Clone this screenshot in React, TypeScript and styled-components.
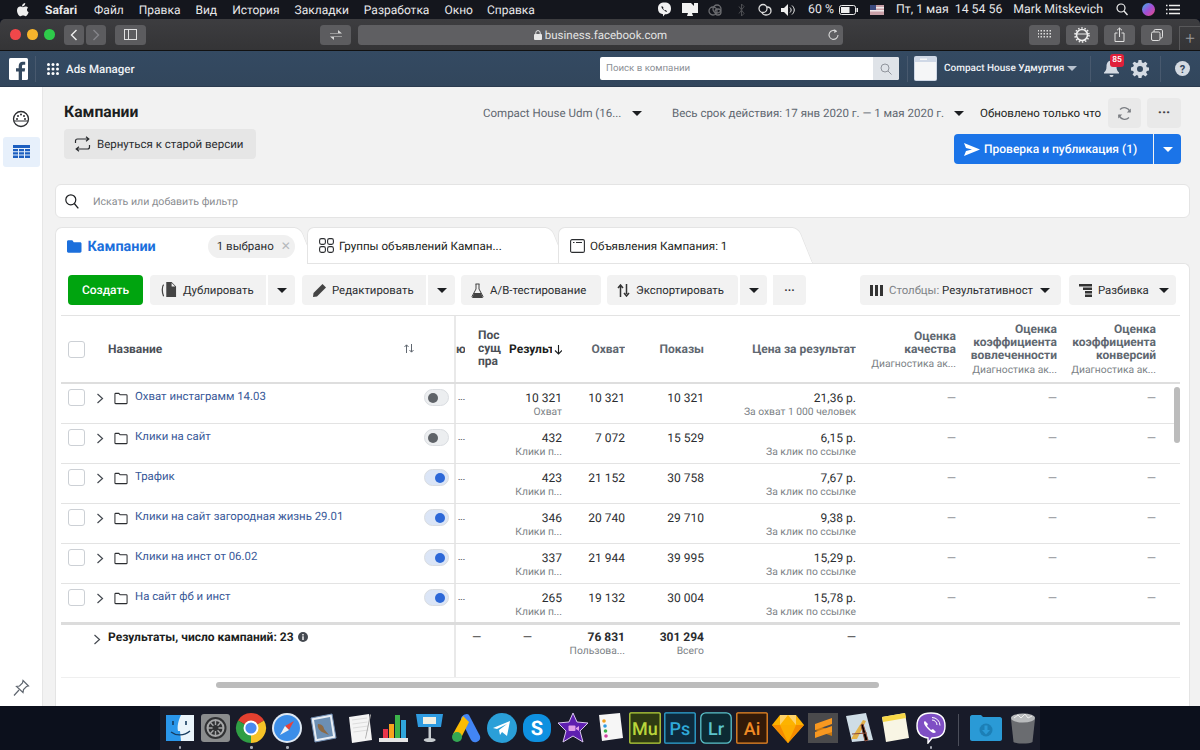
import React from 'react';
import styled, { createGlobalStyle } from 'styled-components';

const Global = createGlobalStyle`
  html, body { margin: 0; padding: 0; background: #0b0f1a; }
  * { box-sizing: border-box; }
  body { font-family: Roboto, "Liberation Sans", sans-serif; text-rendering: geometricPrecision; }
`;

const Page = styled.div`
  width: 1200px; height: 750px; overflow: hidden; display: flex; flex-direction: column; background: #0c101c; position: relative;
`;

/* ---------- macOS menu bar ---------- */
const MenuBar = styled.div`
  height: 19px; flex: none; background: #14161d; color: #e8e8ea; display: flex; align-items: center;
  padding: 0 20px 0 17px; font-size: 12px;
`;
const MenuItem = styled.span<{ $bold?: boolean; $ml?: number }>`
  font-weight: ${p => (p.$bold ? 700 : 400)}; margin-left: ${p => p.$ml ?? 0}px; white-space: nowrap;
`;
const MenuRight = styled.div`
  margin-left: auto; display: flex; align-items: center; font-size: 12.3px;
`;
const Glyph = styled.svg<{ $ml?: number }>`
  display: block; flex: none; margin-left: ${p => p.$ml ?? 0}px;
`;

/* ---------- Safari toolbar ---------- */
const SafariBar = styled.div`
  height: 32px; flex: none; background: linear-gradient(#3d3d40, #343436); border-bottom: 1px solid #111;
  border-radius: 5px 5px 0 0; display: flex; align-items: center; padding-left: 10px; position: relative;
`;
const Light = styled.span<{ $c: string }>`
  width: 10.5px; height: 10.5px; border-radius: 50%; background: ${p => p.$c}; margin-right: 6.5px; flex: none;
`;
const SafariBtn = styled.div<{ $w: number; $ml?: number }>`
  width: ${p => p.$w}px; height: 20px; border-radius: 3.5px; background: #5c5c5f; margin-left: ${p => p.$ml ?? 0}px;
  display: flex; align-items: center; justify-content: center; flex: none; color: #dcdcdc;
`;
const UrlBar = styled.div`
  width: 485px; height: 20px; margin-left: 7px; border-radius: 3.5px; background: #5f5f62; color: #e4e4e4; font-size: 11.5px;
  display: flex; align-items: center; justify-content: center; gap: 3px; position: relative; flex: none;
`;
const UrlReload = styled.span`
  position: absolute; right: 3px; top: 3px; display: flex;
`;
const NewTab = styled.div`
  margin-left: 7px; width: 21px; height: 24px; align-self: flex-end; border-left: 1px solid #58585a; border-top: 1px solid #58585a;
  color: #9b9b9d; font-size: 17px; font-weight: 300; display: flex; align-items: center; justify-content: center;
`;

/* ---------- Facebook top bar ---------- */
const FbBar = styled.div`
  height: 36px; flex: none; background: linear-gradient(#344a62, #32465c); display: flex; align-items: center; color: #eef1f5;
  border-bottom: 1px solid #2b3b4f; padding-left: 9px;
`;
const VDivider = styled.span<{ $ml: number }>`
  width: 1px; height: 26px; background: #48596e; margin-left: ${p => p.$ml}px; flex: none;
`;
const AdsTitle = styled.span`
  margin-left: 7px; width: 70px; flex: none; font-size: 11.5px; font-weight: 500; white-space: nowrap;
`;
const CompanySearch = styled.div`
  margin-left: 464px; width: 299px; height: 23px; background: #fff; border-radius: 2px; display: flex; align-items: center;
  font-size: 9.7px; color: #8c9096; padding-left: 6px; flex: none; overflow: hidden;
`;
const CompanySearchBtn = styled.span`
  margin-left: auto; width: 26px; height: 100%; background: #dfe3e8; display: flex; align-items: center; justify-content: center;
`;
const AccountName = styled.span`
  margin-left: 7px; font-size: 10px; font-weight: 500; white-space: nowrap; width: 118px; flex: none;
`;
const Caret = styled.span<{ $c?: string; $ml?: number; $s?: number }>`
  width: 0; height: 0; flex: none; margin-left: ${p => p.$ml ?? 0}px;
  border-left: ${p => p.$s ?? 5}px solid transparent; border-right: ${p => p.$s ?? 5}px solid transparent;
  border-top: ${p => (p.$s ?? 5) + 0.5}px solid ${p => p.$c ?? '#1c1e21'};
`;
const BellWrap = styled.div`
  position: relative; margin-left: 12px; width: 17px; height: 20px; flex: none;
`;
const Badge = styled.span`
  position: absolute; left: 7px; top: -5px; width: 14px; height: 13px; background: #e0203a; border-radius: 3px; color: #fff;
  font-size: 8.5px; font-weight: 500; display: flex; align-items: center; justify-content: center;
`;

/* ---------- Body ---------- */
const Body = styled.div`
  flex: 1; display: flex; min-height: 0; background: #f2f2f2;
`;
const SideNav = styled.div`
  width: 43px; flex: none; background: #fff; border-right: 1px solid #e6e6e6; display: flex; flex-direction: column; align-items: center;
  padding-top: 23px;
`;
const NavTile = styled.div`
  margin-top: 9px; width: 37px; height: 30px; background: #e7f0fb; border-radius: 3px; display: flex; align-items: center; justify-content: center;
`;
const PinWrap = styled.div`
  margin-top: auto; margin-bottom: 9px; display: flex;
`;
const Content = styled.div`
  flex: 1; min-width: 0; padding: 0 10px 0 12px; display: flex; flex-direction: column;
`;
const Header = styled.div`
  height: 97px; flex: none; display: flex; justify-content: space-between; padding: 11px 9px 0 9px;
`;
const HeaderLeft = styled.div`
  display: flex; flex-direction: column; align-items: flex-start;
`;
const Title = styled.div`
  font-size: 15.7px; font-weight: 700; color: #1c1e21; line-height: 28px; height: 31px;
`;
const OldVersionBtn = styled.div`
  width: 192px; height: 30px; background: #e6e6e6; border-radius: 4px; display: flex; align-items: center; padding-left: 10px; gap: 6px;
  font-size: 11.5px; color: #2b2d30; white-space: nowrap;
`;
const HeaderRight = styled.div`
  display: flex; flex-direction: column; align-items: flex-end; gap: 6px;
`;
const HeaderTop = styled.div`
  display: flex; align-items: center; height: 30px;
`;
const Muted = styled.span<{ $w: number; $ml?: number }>`
  font-size: 11.5px; color: #606770; width: ${p => p.$w}px; margin-left: ${p => p.$ml ?? 0}px; white-space: nowrap; flex: none;
`;
const Strong = styled.span`
  font-size: 11.5px; color: #1c1e21; white-space: nowrap; margin-left: 16px; width: 124px; flex: none;
`;
const SquareBtn = styled.div<{ $ml: number; $w?: number }>`
  width: ${p => p.$w ?? 33}px; height: 30px; background: #e9e9e9; border-radius: 4px; margin-left: ${p => p.$ml}px; display: flex; align-items: center; justify-content: center;
  color: #444; font-size: 14px; font-weight: 700; flex: none;
`;
const PublishRow = styled.div`
  display: flex; gap: 1px; height: 30px;
`;
const PublishBtn = styled.div`
  width: 199px; background: #1b74e8; color: #fff; border-radius: 4px 0 0 4px; display: flex; align-items: center; padding-left: 10px; gap: 4px;
  font-size: 12px; font-weight: 500; white-space: nowrap;
`;
const PublishCaret = styled.div`
  width: 27px; background: #1b74e8; border-radius: 0 4px 4px 0; display: flex; align-items: center; justify-content: center;
`;
const FilterBar = styled.div`
  height: 34px; flex: none; background: #fff; border: 1px solid #e4e4e4; border-radius: 6px; display: flex; align-items: center; padding-left: 9px; gap: 14px;
  font-size: 10.6px; color: #8a8d91;
`;
const Tabs = styled.div`
  margin-top: 9px; height: 37px; flex: none; display: flex; align-items: stretch; position: relative; z-index: 1;
`;
const Tab = styled.div<{ $w: number; $active?: boolean; $ml?: number }>`
  position: relative; width: ${p => p.$w}px; margin-left: ${p => p.$ml ?? 0}px; flex: none; background: #fff;
  border: 1px solid #e4e4e4; border-right: none; border-bottom: ${p => (p.$active ? 'none' : '1px solid #e4e4e4')};
  border-radius: 7px 0 0 0; display: flex; align-items: center; padding-left: 11px; font-size: 11.6px; color: #1c1e21; gap: 5px; white-space: nowrap;
  &::after {
    content: ''; position: absolute; top: -1px; right: -13px; bottom: ${p => (p.$active ? '0' : '-1px')}; width: 26px; background: #fff; z-index: -1;
    border: 1px solid #e4e4e4; border-left: none; border-bottom: ${p => (p.$active ? 'none' : '1px solid #e4e4e4')}; border-radius: 0 7px 0 0; transform: skewX(22deg);
  }
`;
const TabTitle = styled.span`
  color: #1b6fdc; font-size: 14.4px; font-weight: 700; padding-top: 1px; margin-left: 1px;
`;
const Pill = styled.span`
  margin-left: 47px; height: 23px; width: 90px; border-radius: 12px; background: #f0f0f0; font-size: 11.5px; display: flex; align-items: center; padding-left: 9px; gap: 7px; color: #2b2d30;
`;
const PillX = styled.span`
  color: #b5b8bc; font-size: 12px;
`;
const Panel = styled.div`
  flex: 1; min-height: 0; background: #fff; border: 1px solid #e4e4e4; border-bottom: none; border-radius: 0 6px 0 0; margin-top: -1px; padding: 11px 5px 0 5px; position: relative;
`;
const ActionBar = styled.div`
  display: flex; align-items: stretch; height: 30px; padding-left: 7px; padding-right: 8px;
`;
const Create = styled.div`
  width: 75px; background: #00a40f; color: #fff; border-radius: 4px; font-size: 12px; font-weight: 500; display: flex; align-items: center; justify-content: center; flex: none;
`;
const Action = styled.div<{ $w: number; $ml?: number; $split?: 'l' | 'r'; $push?: boolean }>`
  width: ${p => p.$w}px; margin-left: ${p => (p.$push ? 'auto' : `${p.$ml ?? 7}px`)}; flex: none; background: #f2f2f2;
  border-radius: ${p => (p.$split === 'l' ? '4px 0 0 4px' : p.$split === 'r' ? '0 4px 4px 0' : '4px')};
  display: flex; align-items: center; justify-content: ${p => (p.$split === 'r' ? 'center' : 'flex-start')}; gap: 6px; padding-left: ${p => (p.$split === 'r' ? 0 : 10)}px;
  font-size: 11.4px; color: #2b2d30; white-space: nowrap;
  svg { flex: none; }
`;
const ActionMuted = styled.span`
  color: #808488;
`;
const TableWrap = styled.div`
  margin-top: 10px; border-top: 1px solid #e3e3e3; margin-right: 4px; position: relative;
`;
const Row = styled.div<{ $h: number; $b?: number; $c?: string }>`
  display: grid; grid-template-columns: 395px 14px 35px 57px 63px 79px 152px 100px 101px 99px 1fr; height: ${p => p.$h}px;
  border-bottom: ${p => p.$b ?? 1}px solid ${p => p.$c ?? '#e3e3e3'};
`;
const NameCell = styled.div`
  border-right: 2px solid #e9e9e9; display: flex; align-items: flex-start; position: relative; min-width: 0;
`;
const CheckBox = styled.span<{ $top?: number }>`
  width: 17px; height: 17px; margin: ${p => p.$top ?? 5}px 0 0 7px; border: 1px solid #ccd0d5; border-radius: 3px; background: #fff; flex: none;
`;
const HeaderName = styled.span`
  margin-left: 23px; margin-top: 26px; font-size: 12px; font-weight: 700; color: #4b4f56;
`;
const SortIcon = styled.span`
  position: absolute; right: 40px; top: 28px; display: flex;
`;
const Chevron = styled.svg`
  display: block; margin: 9px 0 0 11px; flex: none;
`;
const FolderIcon = styled.svg`
  display: block; margin: 8px 0 0 10px; flex: none;
`;
const CampName = styled.span`
  margin: 5px 0 0 7px; font-size: 11.4px; color: #385898; white-space: nowrap;
`;
const Toggle = styled.span<{ $on?: boolean }>`
  margin: 5px 5px 0 auto; width: 25px; height: 17px; border-radius: 9px; border: 1px solid #dadde1; padding: 2px 3px;
  background: ${p => (p.$on ? '#dbe5f6' : '#eceef0')}; display: flex; justify-content: ${p => (p.$on ? 'flex-end' : 'flex-start')}; align-items: center; flex: none;
  &::before { content: ''; width: 10px; height: 10px; border-radius: 50%; background: ${p => (p.$on ? '#2d68d8' : '#5f6368')}; }
`;
const Dots = styled.span`
  font-size: 8px; font-weight: 700; color: #606770; padding: 9px 0 0 2px; white-space: nowrap; overflow: hidden;
`;
const Clip = styled.div<{ $w?: number; $pl?: number; $pt?: number }>`
  font-size: 12px; font-weight: 700; color: #4b4f56; overflow: hidden; white-space: nowrap; line-height: 13px;
  max-width: ${p => (p.$w ? `${p.$w}px` : 'none')}; padding-left: ${p => p.$pl ?? 0}px; padding-top: ${p => p.$pt ?? 13}px;
`;
const HeadCell = styled.div<{ $active?: boolean }>`
  display: flex; flex-direction: column; justify-content: center; align-items: flex-end; text-align: right; font-size: 12px; font-weight: 700; line-height: 13px;
  color: ${p => (p.$active ? '#1c1e21' : '#606770')}; white-space: nowrap; overflow: hidden; padding-top: 1px;
`;
const HeadRow = styled(HeadCell)`
  flex-direction: row; align-items: center; justify-content: flex-end;
`;
const HeadClip = styled.span`
  width: 43px; overflow: hidden;
`;
const HeadArrow = styled.svg`
  display: block; flex: none; margin: 0 -1px 0 2px;
`;
const HeadSub = styled.span`
  font-size: 10.3px; font-weight: 400; color: #7b7f85; margin-top: 1px; line-height: 13px;
`;
const Cell = styled.div<{ $bold?: boolean; $pt?: number; $pr?: number }>`
  text-align: right; padding-top: ${p => p.$pt ?? 7}px; padding-right: ${p => p.$pr ?? 0}px; font-size: 12px; line-height: 14px; color: #2b2d30; font-weight: ${p => (p.$bold ? 700 : 400)}; white-space: nowrap;
`;
const Sub = styled.div`
  font-size: 10.3px; line-height: 14px; color: #7b7f85; font-weight: 400;
`;
const Dash = styled.span<{ $dark?: boolean }>`
  color: ${p => (p.$dark ? '#333' : '#8a8d91')};
`;
const SumLabel = styled.span`
  margin: 5px 0 0 -1px; font-size: 12px; font-weight: 700; color: #1c1e21; white-space: nowrap; display: flex; align-items: center; gap: 4px;
`;
const SumChevron = styled.svg`
  display: block; margin: 9px 8px 0 32px; flex: none;
`;
const SumDash = styled.div`
  grid-column: 2 / 4; padding: 5px 0 0 16px; font-size: 12px; color: #333;
`;
const VScroll = styled.div`
  position: absolute; right: 0; top: 71px; width: 6px; height: 56px; border-radius: 3px; background: #bcbcbc;
`;
const HScroll = styled.div`
  position: absolute; left: 155px; top: 366px; width: 663px; height: 6px; border-radius: 3px; background: #bcbcbc;
`;

/* ---------- Dock ---------- */
const DockRow = styled.div`
  height: 44px; flex: none; display: flex; justify-content: center; background: #0c101c;
`;
const Dock = styled.div`
  width: 880px; height: 44px; background: #181b29; display: flex; align-items: flex-start; padding: 5px 0 0 2px; border-top: 1px solid #3a3d48; position: relative;
`;
const Slot = styled.div<{ $w?: number }>`
  width: ${p => p.$w ?? 35.75}px; flex: none; display: flex; flex-direction: column; align-items: center; position: relative;
`;
const RunDot = styled.span`
  position: absolute; left: 50%; margin-left: -1px; top: 34px; width: 2.5px; height: 2.5px; border-radius: 50%; background: #a9adb6;
`;
const DockSep = styled.span`
  width: 1px; height: 32px; background: #4b4e5a; margin: 2px 9px 0 9px; flex: none;
`;

const Ico = ({ children }: { children: React.ReactNode }) => (
  <Glyph width={32} height={32} viewBox="0 0 32 32">{children}</Glyph>
);
const Cc = ({ letters, fg, bg, r = 1 }: { letters: string; fg: string; bg: string; r?: number }) => (
  <Ico>
    <rect x="0.8" y="0.8" width="30.4" height="30.4" rx={r} fill={bg} stroke={fg} strokeWidth="1.3" />
    <text x="16" y="22.5" textAnchor="middle" fontFamily="Roboto, sans-serif" fontSize="18" fontWeight="500" fill={fg}>{letters}</text>
  </Ico>
);

const dockIcons: { el: React.ReactNode; dot?: boolean }[] = [
  { dot: true, el: <Ico><rect x="2" y="3" width="28" height="26" fill="#eaf4fb" /><path d="M2 3h15c-3 6-4 12-3 16h2l1 10H2z" fill="#2a96ea" /><path d="M9 9v4M22 9v4" stroke="#173c60" strokeWidth="1.6" /><path d="M7 20c5 4 13 4 19-1" stroke="#173c60" strokeWidth="1.3" fill="none" /></Ico> },
  { el: <Ico><rect x="1" y="2" width="29" height="28" rx="3" fill="#8a8c8d" /><circle cx="15.5" cy="16" r="11" fill="#303133" /><circle cx="15.5" cy="16" r="8" fill="none" stroke="#a5a6a7" strokeWidth="2" /><path d="M15.5 8v16M8 16h15M10 10l11 12M21 10L10 22" stroke="#a5a6a7" strokeWidth="1.4" /><circle cx="15.5" cy="16" r="3" fill="#303133" /></Ico> },
  { dot: true, el: <Ico><path d="M16 16L3 8.5A15 15 0 0 1 29 8.5z" fill="#e2402f" /><path d="M16 16L29 8.5A15 15 0 0 1 16 31z" fill="#f6c327" /><path d="M16 16L16 31A15 15 0 0 1 3 8.5z" fill="#2f9e44" /><circle cx="16" cy="16" r="7.5" fill="#fff" /><circle cx="16" cy="16" r="5.6" fill="#4a8af0" /></Ico> },
  { dot: true, el: <Ico><circle cx="16" cy="16" r="15" fill="#dfe9f3" /><circle cx="16" cy="16" r="13" fill="#3c8ee8" /><path d="M23 9l-9 5 4 4z" fill="#e8423a" /><path d="M9 23l5-9 4 4z" fill="#f2f2f2" /></Ico> },
  { el: <Ico><path d="M4 6L25 2l4 24-21 4z" fill="#e8eef5" stroke="#6f8cb0" /><path d="M7 8l16-3 3 19-16 3z" fill="#6c8fb3" /><path d="M11 12c4 0 6 3 6 5l5 6-7-3c-3-2-5-5-4-8z" fill="#8d6a44" /></Ico> },
  { el: <Ico><path d="M6 5l20-3 3 26-20 3z" fill="#f4f4f4" /><path d="M9 8l15-2M9.5 12l15-2M10 16l15-2M10.5 20l15-2" stroke="#ddd" /><path d="M27 2l1 1-5 23-1 1z" fill="#a8a8a8" /></Ico> },
  { el: <Ico><path d="M1 26h29v4H1z" fill="#e6e6e6" /><rect x="5" y="17" width="5" height="9" fill="#e8354a" /><rect x="11" y="12" width="5" height="14" fill="#f7a31c" /><rect x="17" y="3" width="5" height="23" fill="#3cb44a" /><rect x="23" y="8" width="5" height="18" fill="#2fa6dc" /></Ico> },
  { el: <Ico><path d="M2 2h27l-2 13H4z" fill="#2f9be0" /><rect x="9" y="5" width="13" height="7" fill="#f1efe2" /><rect x="14.5" y="15" width="2.5" height="12" fill="#c8ccd0" /><ellipse cx="15.7" cy="28" rx="6" ry="2" fill="#c8ccd0" /></Ico> },
  { el: <Ico><path d="M19 3l11 21a5 5 0 0 1-9 4L11 8c-1-4 6-8 8-5z" fill="#4285f4" /><path d="M13 4L3 22l8 4 8-16z" fill="#fbbc04" /><circle cx="7" cy="25" r="5" fill="#34a853" /></Ico> },
  { el: <Ico><circle cx="16" cy="16" r="15" fill="#2a9fd8" /><path d="M7 16L24 9l-3 15-5-4-2 3-1-5 8-6-10 5z" fill="#fff" /></Ico> },
  { el: <Ico><rect x="2" y="2" width="28" height="28" rx="12" fill="#0e90e0" /><text x="16" y="23" textAnchor="middle" fontFamily="Roboto, sans-serif" fontSize="20" fontWeight="700" fill="#fff">S</text></Ico> },
  { el: <Ico><path d="M16 1l4 9 11 1-8 8 3 11-10-6-10 6 3-11-8-8 11-1z" fill="#5e1fb0" stroke="#d9c8ee" /><rect x="11.5" y="13.5" width="7" height="5.5" rx="1" fill="#e0a0e8" /><path d="M19 16l3-2v5l-3-2z" fill="#e0a0e8" /></Ico> },
  { el: <Ico><path d="M6 3l21-2 3 25-21 3z" fill="#f6f6f6" /><circle cx="11" cy="9" r="1.8" fill="#f0a020" /><circle cx="12" cy="14" r="1.8" fill="#2f9be0" /><circle cx="12.5" cy="19" r="1.8" fill="#3cb44a" /><circle cx="13" cy="24" r="1.8" fill="#d040a0" /></Ico> },
  { el: <Cc letters="Mu" fg="#b9d63b" bg="#2e3a12" /> },
  { el: <Cc letters="Ps" fg="#2fa8d8" bg="#0d2a3d" /> },
  { el: <Cc letters="Lr" fg="#5bc4cc" bg="#0c2a33" r={5} /> },
  { el: <Cc letters="Ai" fg="#f08a24" bg="#331a08" /> },
  { el: <Ico><path d="M8 3h16l8 10-16 18L0 13z" fill="#fdb300" /><path d="M0 13h32L16 31z" fill="#f58b00" /><path d="M8 13h16l-8 18z" fill="#fdad00" /><path d="M8 3l8 0-8 10zM24 3h-8l8 10z" fill="#fed26a" /></Ico> },
  { el: <Ico><rect x="1" y="1" width="30" height="30" fill="#4a4a4c" /><path d="M8 13l17 5.500V24L8 18z" fill="#c9780f" /><path d="M8 12l17-6v6L8 18zM8 20l17-6v6L8 26z" fill="#f89820" /></Ico> },
  { el: <Ico><path d="M3 4l20-3 7 27-21 2z" fill="#cfdde6" /><path d="M8 27L20 8l3 1-9 18z" fill="#e3b24a" /><path d="M22 29L18 13l2-1 5 16zM9 22l15-1" stroke="#8a4a3a" strokeWidth="1" /></Ico> },
  { el: <Ico><path d="M3 5l23-4 4 25-23 4z" fill="#f8f5e4" /><path d="M3 5l23-4 1 5-23 4z" fill="#f8d848" /></Ico> },
  { dot: true, el: <Ico><path d="M16 1c9 0 14 4 14 13s-5 12-13 12l-4 5v-5C5 25 2 21 2 14 2 5 7 1 16 1z" fill="#7f4fc4" stroke="#fff" strokeWidth="1.4" /><path d="M10 9c-2 1-1 4 3 8s6 5 8 3l-3-3-2 1-4-4 1-2z" fill="#fff" /><path d="M17 8a5 5 0 0 1 5 5M17 5.5a8 8 0 0 1 8 8" stroke="#fff" fill="none" strokeWidth="1" /></Ico> },
];

const TinyChevron = ({ as: C }: { as: typeof Chevron }) => (
  <C width="8" height="11" viewBox="0 0 8 11"><path d="M1.5 1l5 4.5-5 4.5" fill="none" stroke="#444950" strokeWidth="1.2" /></C>
);

const Folder = () => (
  <FolderIcon width="14" height="13" viewBox="0 0 15 13"><path d="M1 11.2V1.8C1 1.2 1.3 1 1.8 1h3.4l1.3 1.6h6.7c.5 0 .8.3.8.8v7.8c0 .6-.4.8-.8.8H1.8c-.5 0-.8-.3-.8-.8z" fill="none" stroke="#2b2d30" strokeWidth="1.1" /></FolderIcon>
);

const rows = [
  { n: 'Охват инстаграмм 14.03', on: false, r: '10 321', rs: 'Охват', a: '10 321', s: '10 321', c: '21,36 р.', cs: 'За охват 1 000 человек' },
  { n: 'Клики на сайт', on: false, r: '432', rs: 'Клики п...', a: '7 072', s: '15 529', c: '6,15 р.', cs: 'За клик по ссылке' },
  { n: 'Трафик', on: true, r: '423', rs: 'Клики п...', a: '21 152', s: '30 758', c: '7,67 р.', cs: 'За клик по ссылке' },
  { n: 'Клики на сайт загородная жизнь 29.01', on: true, r: '346', rs: 'Клики п...', a: '20 740', s: '29 710', c: '9,38 р.', cs: 'За клик по ссылке' },
  { n: 'Клики на инст от 06.02', on: true, r: '337', rs: 'Клики п...', a: '21 944', s: '39 995', c: '15,29 р.', cs: 'За клик по ссылке' },
  { n: 'На сайт фб и инст', on: true, r: '265', rs: 'Клики п...', a: '19 132', s: '30 004', c: '15,78 р.', cs: 'За клик по ссылке' },
];

export default function App() {
  return (
    <Page>
      <Global />
      <MenuBar>
        <Glyph width="12" height="14" viewBox="0 0 12 14"><path fill="#eee" d="M8.2 0c.1 1-.3 1.9-.9 2.5-.6.7-1.4 1.1-2.2 1-.1-.9.3-1.8.9-2.4C6.6.5 7.5.1 8.2 0zM11 4.800c-1.600 1-1.400 3.500.6 4.400-.5 1.500-1.700 4-3 4-.9 0-1.300-.6-2.500-.6s-1.600.6-2.500.6C2 13.200 0 10 0 7.400 0 4.900 1.600 3.600 3.200 3.600c1 0 1.900.7 2.800.7.800 0 1.800-.7 3-.7.8 0 1.500.4 2 1.200z" /></Glyph>
        <MenuItem $bold $ml={16}>Safari</MenuItem>
        <MenuItem $ml={17}>Файл</MenuItem>
        <MenuItem $ml={15}>Правка</MenuItem>
        <MenuItem $ml={15}>Вид</MenuItem>
        <MenuItem $ml={15}>История</MenuItem>
        <MenuItem $ml={15}>Закладки</MenuItem>
        <MenuItem $ml={15}>Разработка</MenuItem>
        <MenuItem $ml={15}>Окно</MenuItem>
        <MenuItem $ml={14}>Справка</MenuItem>
        <MenuRight>
          <Glyph width="15" height="15" viewBox="0 0 15 15"><path fill="#f2f2f2" d="M7.500.5c4 0 6.500 1.800 6.500 6s-2.500 5.800-6 5.800l-2 2.200v-2.300C2.500 11.700 1 9.800 1 6.500 1 2.300 3.500.5 7.500.5z" /><path fill="#14161d" d="M5 4c-1 .6-.5 2 1.300 3.800S9.400 10 10.200 9.400L8.700 8l-1 .4-1.600-1.600.4-1z" /></Glyph>
          <Glyph $ml={10} width="16" height="15" viewBox="0 0 16 15"><path fill="#f2f2f2" d="M0 1h16v10H0z" /><path fill="#14161d" d="M9 1l3-1v4z" /><path fill="#f2f2f2" d="M6 11h4l1 3H5z" /></Glyph>
          <Glyph $ml={10} width="15" height="12" viewBox="0 0 15 12"><g fill="none" stroke="#6b6c70" strokeWidth="1.3"><circle cx="5" cy="7" r="4" /><circle cx="9" cy="5" r="4" /><circle cx="10" cy="8" r="3" /></g></Glyph>
          <Glyph $ml={15} width="7" height="14" viewBox="0 0 7 14"><path d="M1 3.500l5 7-2.500 2.500V1L6 3.500l-5 7" fill="none" stroke="#4d4e52" /></Glyph>
          <Glyph $ml={12} width="15" height="14" viewBox="0 0 15 14"><g fill="none" stroke="#ddd" strokeWidth="1.300"><circle cx="6" cy="5.500" r="4" /><path d="M10 4c3 0 4 2 4 4s-2 4-5 4-4-2-4-3" /></g></Glyph>
          <Glyph $ml={9} width="15" height="12" viewBox="0 0 15 12"><path fill="#eee" d="M0 4h3l4-4v12L3 8H0z" /><path d="M9 3.500c1.500 1.500 1.500 3.500 0 5M11 1.500c3 3 3 6 0 9" fill="none" stroke="#eee" /></Glyph>
          <MenuItem $ml={12}>60 %</MenuItem>
          <Glyph $ml={5} width="19" height="10" viewBox="0 0 19 10"><rect x=".5" y=".5" width="16" height="9" rx="2" fill="none" stroke="#eee" /><rect x="2" y="2" width="8.500" height="6" fill="#eee" /><rect x="17.500" y="3" width="1.500" height="4" fill="#eee" /></Glyph>
          <Glyph $ml={12} width="14" height="10" viewBox="0 0 14 10"><rect width="14" height="10" fill="#c9a0a8" /><rect y="2" width="14" height="1.500" fill="#f1e8ea" /><rect y="5" width="14" height="1.500" fill="#f1e8ea" /><rect width="6" height="5" fill="#3c4a80" /></Glyph>
          <MenuItem $ml={12}>Пт, 1 мая&nbsp; 14 54 56</MenuItem>
          <MenuItem $ml={11}>Mark Mitskevich</MenuItem>
          <Glyph $ml={13} width="12" height="13" viewBox="0 0 12 13"><circle cx="5" cy="5" r="4" fill="none" stroke="#eee" strokeWidth="1.200" /><path d="M8 8l3.500 4" stroke="#eee" strokeWidth="1.300" /></Glyph>
          <Glyph $ml={14} width="13" height="13" viewBox="0 0 13 13"><defs><linearGradient id="siri" x1="0" y1="0" x2="1" y2="1"><stop offset="0" stopColor="#38b6e8" /><stop offset=".5" stopColor="#a050d8" /><stop offset="1" stopColor="#e84a80" /></linearGradient></defs><circle cx="6.500" cy="6.500" r="6.500" fill="url(#siri)" /></Glyph>
          <Glyph $ml={11} width="14" height="11" viewBox="0 0 14 11"><path d="M3 1.500h11M3 5.500h11M3 9.500h11" stroke="#eee" strokeWidth="1.300" /><path d="M0 1.500h1.500M0 5.500h1.500M0 9.500h1.500" stroke="#eee" strokeWidth="1.300" /></Glyph>
        </MenuRight>
      </MenuBar>

      <SafariBar>
        <Light $c="#f0474a" /><Light $c="#f6b42c" /><Light $c="#2ecb4a" />
        <SafariBtn $w={20} $ml={3}><svg width="8" height="12" viewBox="0 0 8 12"><path d="M6.500 1L1.500 6l5 5" fill="none" stroke="#eee" strokeWidth="1.400" /></svg></SafariBtn>
        <SafariBtn $w={20} $ml={2}><svg width="8" height="12" viewBox="0 0 8 12"><path d="M1.500 1l5 5-5 5" fill="none" stroke="#85858a" strokeWidth="1.400" /></svg></SafariBtn>
        <SafariBtn $w={31} $ml={9}><svg width="13" height="11" viewBox="0 0 13 11"><rect x=".5" y=".5" width="12" height="10" fill="none" stroke="#e0e0e0" /><path d="M4.500 1v9" stroke="#e0e0e0" /></svg></SafariBtn>
        <SafariBtn $w={31} $ml={174}><svg width="12" height="10" viewBox="0 0 12 10"><path d="M0 3h8V0l4 3.500H0zM12 7H4v3L0 6.500h12z" fill="#d8d8d8" /></svg></SafariBtn>
        <UrlBar>
          <svg width="8" height="10" viewBox="0 0 8 10"><path d="M1.800 4V2.800a2.200 2.200 0 0 1 4.400 0V4" fill="none" stroke="#e8e8e8" /><rect y="4" width="8" height="6" rx="1" fill="#e8e8e8" /></svg>
          business.facebook.com
          <UrlReload><svg width="13" height="14" viewBox="0 0 13 14"><path d="M9.500 3.500a4.500 4.500 0 1 0 1.500 3.500" fill="none" stroke="#d4d4d4" strokeWidth="1.100" /><path d="M7.500 1l2.500 2.500-2.800 1.500z" fill="#d4d4d4" /></svg></UrlReload>
        </UrlBar>
        <SafariBtn $w={31} $ml={186}><svg width="13" height="9" viewBox="0 0 13 9"><g fill="#dcdcdc">{[0, 3, 6].map(y => [0, 3, 6, 9, 12].map(x => <rect key={`${x}-${y}`} x={x - 0.5} y={y} width="1.500" height="1.500" />))}</g></svg></SafariBtn>
        <SafariBtn $w={32} $ml={6}><svg width="16" height="16" viewBox="0 0 16 16"><circle cx="8" cy="8" r="5.500" fill="none" stroke="#eee" strokeWidth="1.600" /><circle cx="8" cy="8" r="7" fill="none" stroke="#eee" strokeWidth="1.600" strokeDasharray="1.500 1.700" /><path d="M3 7h10" stroke="#eee" /></svg></SafariBtn>
        <SafariBtn $w={31} $ml={6}><svg width="11" height="15" viewBox="0 0 11 15"><path d="M3.500 6H1v8.500h9V6H7.500M5.500 10V1M3 3.300L5.500 1 8 3.300" fill="none" stroke="#e0e0e0" /></svg></SafariBtn>
        <SafariBtn $w={31} $ml={6}><svg width="12" height="12" viewBox="0 0 12 12"><rect x=".5" y="3" width="8.500" height="8.500" rx="1.500" fill="none" stroke="#e0e0e0" /><path d="M3 3V1.800C3 1 3.500.5 4.200.5h6c.8 0 1.300.5 1.300 1.300v6c0 .7-.5 1.200-1.300 1.200H9" fill="none" stroke="#e0e0e0" /></svg></SafariBtn>
        <NewTab>+</NewTab>
      </SafariBar>

      <FbBar>
        <Glyph width="19" height="22" viewBox="0 0 19 22"><rect width="19" height="22" rx="1.500" fill="#fff" /><path fill="#34495f" d="M13 22v-8.500h2.700l.4-3.300H13V8.300c0-1 .3-1.600 1.600-1.600h1.600V3.800c-.3 0-1.300-.1-2.400-.1-2.400 0-4.100 1.500-4.100 4.200v2.300H7v3.300h2.700V22z" /></Glyph>
        <VDivider $ml={7} />
        <Glyph $ml={11} width="12" height="12" viewBox="0 0 12 12"><g fill="#fff">{[1.500, 6, 10.500].map(y => [1.500, 6, 10.500].map(x => <circle key={`${x}-${y}`} cx={x} cy={y} r="1.500" />))}</g></Glyph>
        <AdsTitle>Ads Manager</AdsTitle>
        <CompanySearch>
          Поиск в компании
          <CompanySearchBtn><svg width="12" height="12" viewBox="0 0 12 12"><circle cx="5" cy="5" r="4" fill="none" stroke="#90949c" /><path d="M8 8l3.500 3.500" stroke="#90949c" /></svg></CompanySearchBtn>
        </CompanySearch>
        <VDivider $ml={8} />
        <Glyph $ml={6} width="23" height="25" viewBox="0 0 23 25"><rect width="23" height="25" rx="2" fill="#cfd8e6" /><rect x="1" y="6" width="21" height="18" fill="#f5f6f7" /><rect x="6" y="2.500" width="7" height="1.500" fill="#f5f6f7" /></Glyph>
        <AccountName>Compact House Удмуртия</AccountName>
        <Caret $c="#b8c2cf" $ml={5} />
        <VDivider $ml={13} />
        <BellWrap>
          <Glyph width="17" height="20" viewBox="0 0 17 20"><path fill="#d4dae2" d="M8.500 1.500c3.500 0 5 2.800 5 6 0 3.500 1 4.500 2.500 6v1H1v-1c1.500-1.500 2.500-2.500 2.500-6 0-3.200 1.500-6 5-6zM6.500 16h4a2 2 0 0 1-4 0z" /></Glyph>
          <Badge>85</Badge>
        </BellWrap>
        <Glyph $ml={11} width="18" height="18" viewBox="0 0 18 18"><path fillRule="evenodd" fill="#d4dae2" d="M7.5 0h3l.4 2.4 1.5.7 2-1.4 2.1 2.1-1.4 2 .7 1.5L18 7.5v3l-2.200.4-.7 1.500 1.400 2-2.100 2.100-2-1.400-1.500.7-.4 2.200h-3l-.4-2.200-1.500-.7-2 1.400-2.100-2.100 1.400-2-.7-1.500L0 10.500v-3l2.200-.7.7-1.500-1.400-2L3.600 1.700l2 1.400 1.500-.7zM9 6a3 3 0 1 0 0 6 3 3 0 0 0 0-6z" /></Glyph>
        <VDivider $ml={11} />
        <Glyph $ml={14} width="15" height="15" viewBox="0 0 15 15"><circle cx="7.500" cy="7.500" r="7.500" fill="#d4dae2" /><text x="7.500" y="11.500" textAnchor="middle" fontFamily="Roboto, sans-serif" fontSize="11" fontWeight="700" fill="#32465c">?</text></Glyph>
      </FbBar>

      <Body>
        <SideNav>
          <svg width="18" height="18" viewBox="0 0 18 18"><circle cx="9" cy="9" r="7.500" fill="none" stroke="#2b2d30" strokeWidth="1.300" /><path d="M2 11h14" stroke="#2b2d30" /><g fill="#2b2d30"><circle cx="6" cy="6" r="1" /><circle cx="9" cy="4.500" r="1" /><circle cx="12" cy="6" r="1" /><circle cx="5" cy="9" r="1" /><circle cx="13" cy="9" r="1" /></g></svg>
          <NavTile><svg width="17" height="15" viewBox="0 0 17 15"><path fill="#1d5fc0" d="M0 0h17v3H0zM0 4h5v2.300H0zM6 4h5v2.300H6zM12 4h5v2.300h-5zM0 7.300h5v2.300H0zM6 7.300h5v2.300H6zM12 7.300h5v2.300h-5zM0 10.600h5V13H0zM6 10.600h5V13H6zM12 10.600h5V13h-5z" /></svg></NavTile>
          <PinWrap><svg width="18" height="18" viewBox="0 0 18 18"><path d="M11 1.500l5.500 5.500-2 .5-3 3-.5 3L4.500 7.500l3-.5 3-3zM7 11l-5 5.500" fill="none" stroke="#606770" strokeWidth="1.200" /></svg></PinWrap>
        </SideNav>
        <Content>
          <Header>
            <HeaderLeft>
              <Title>Кампании</Title>
              <OldVersionBtn>
                <svg width="17" height="16" viewBox="0 0 17 16"><path d="M1.500 7V5c0-1.200.8-2 2-2h11M12 .8L14.800 3 12 5.200M15.500 9v2c0 1.200-.8 2-2 2h-11M5 10.800L2.200 13 5 15.200" fill="none" stroke="#2b2d30" strokeWidth="1.200" /></svg>
                Вернуться к старой версии
              </OldVersionBtn>
            </HeaderLeft>
            <HeaderRight>
              <HeaderTop>
                <Muted $w={149}>Compact House Udm (16...</Muted>
                <Caret />
                <Muted $w={282} $ml={30}>Весь срок действия: 17 янв 2020 г. — 1 мая 2020 г.</Muted>
                <Caret />
                <Strong>Обновлено только что</Strong>
                <SquareBtn $ml={4}><svg width="15" height="15" viewBox="0 0 15 15"><path d="M13 6A6 6 0 0 0 3 3.500M2 9a6 6 0 0 0 10 2.500" fill="none" stroke="#7a7d82" strokeWidth="1.300" /><path d="M13.800 2.500v4h-4zM1.200 12.500v-4h4z" fill="#7a7d82" /></svg></SquareBtn>
                <SquareBtn $ml={6} $w={34}>···</SquareBtn>
              </HeaderTop>
              <PublishRow>
                <PublishBtn>
                  <svg width="16" height="13" viewBox="0 0 16 13"><path fill="#fff" d="M0 0l16 6.500L0 13l2-5 6-1.500L2 5z" /></svg>
                  Проверка и публикация (1)
                </PublishBtn>
                <PublishCaret><Caret $c="#fff" /></PublishCaret>
              </PublishRow>
            </HeaderRight>
          </Header>

          <FilterBar>
            <svg width="14" height="15" viewBox="0 0 14 15"><circle cx="5.800" cy="5.800" r="5" fill="none" stroke="#1c1e21" strokeWidth="1.200" /><path d="M9.300 9.500l4 4.800" stroke="#1c1e21" strokeWidth="1.300" /></svg>
            Искать или добавить фильтр
          </FilterBar>

          <Tabs>
            <Tab $w={240} $active>
              <svg width="15" height="13" viewBox="0 0 15 13"><path fill="#1b6fdc" d="M0 1.500C0 .6.600 0 1.500 0h4l1.500 2h6.500c.9 0 1.500.6 1.500 1.500v8c0 .9-.6 1.500-1.500 1.500h-12C.6 13 0 12.400 0 11.500z" /></svg>
              <TabTitle>Кампании</TabTitle>
              <Pill>1 выбрано <PillX>✕</PillX></Pill>
            </Tab>
            <Tab $w={239} $ml={12}>
              <svg width="15" height="15" viewBox="0 0 15 15"><g fill="none" stroke="#2b2d30" strokeWidth="1.100"><rect x=".6" y=".6" width="5.800" height="5.800" rx="1.800" /><rect x="8.600" y=".6" width="5.800" height="5.800" rx="1.800" /><rect x=".6" y="8.600" width="5.800" height="5.800" rx="1.800" /><rect x="8.600" y="8.600" width="5.800" height="5.800" rx="1.800" /></g></svg>
              Группы объявлений Кампан...
            </Tab>
            <Tab $w={235} $ml={12}>
              <svg width="15" height="14" viewBox="0 0 15 14"><rect x=".6" y=".6" width="13.800" height="12.800" rx="1.500" fill="none" stroke="#2b2d30" strokeWidth="1.100" /><path d="M3 3.500h1.500M6 3.500h6" stroke="#2b2d30" /></svg>
              Объявления Кампания: 1
            </Tab>
          </Tabs>

          <Panel>
            <ActionBar>
              <Create>Создать</Create>
              <Action $w={116} $split="l"><svg width="17" height="16" viewBox="0 0 19 18"><path d="M4 3C2 5 2 12 4 16" fill="none" stroke="#444" strokeWidth="1.400" /><path fill="#444" d="M7 0h6l5 5v12H7zM13 1v4h4z" fillRule="evenodd" /></svg>Дублировать</Action>
              <Action $w={27} $ml={2} $split="r"><Caret /></Action>
              <Action $w={124} $split="l"><Glyph $ml={1} width="13" height="13" viewBox="0 0 13 13"><path fill="#444" d="M9.500 0L13 3.500 4 12.500 0 13l.5-4z" /></Glyph>Редактировать</Action>
              <Action $w={27} $ml={2} $split="r"><Caret /></Action>
              <Action $w={140} $ml={6}><svg width="13" height="15" viewBox="0 0 13 15"><path d="M4.500 1h4M5 1v5L1 13.500c-.2.600.2 1 .8 1h9.400c.6 0 1-.4.800-1L8 6V1" fill="none" stroke="#444" /><path fill="#444" d="M3 10h7l1.500 4h-10z" /></svg>А/В-тестирование</Action>
              <Action $w={131} $ml={6}><svg width="13" height="13" viewBox="0 0 13 13"><path d="M3.500 13V3M1 4l2.500-3L6 4M9.500 0v10M7 9l2.500 3L12 9" fill="none" stroke="#333" strokeWidth="1.500" /></svg>Экспортировать</Action>
              <Action $w={27} $ml={2} $split="r"><Caret /></Action>
              <Action $w={33} $ml={6} $split="r"><b>···</b></Action>
              <Action $w={201} $push><svg width="13" height="11" viewBox="0 0 13 11"><path fill="#333" d="M0 0h3v11H0zM5 0h3v11H5zM10 0h3v11h-3z" /></svg><span><ActionMuted>Столбцы: </ActionMuted>Результативност</span><Caret $ml={1} /></Action>
              <Action $w={107} $ml={8}><svg width="13" height="13" viewBox="0 0 13 13"><path fill="#333" d="M0 0h13v2.500H0zM4 3.500h9V6H4zM6 7h7v2.500H6zM6 10.500h7V13H6z" /></svg>Разбивка<Caret $ml={4} /></Action>
            </ActionBar>

            <TableWrap>
              <Row $h={68} $b={2} $c="#dedede">
                <NameCell>
                  <CheckBox $top={25} />
                  <HeaderName>Название</HeaderName>
                  <SortIcon><svg width="10" height="9" viewBox="0 0 10 9"><path d="M2.500 9V1M.5 3l2-2.200 2 2.200M7.500 0v8M5.500 6l2 2.200 2-2.200" fill="none" stroke="#606770" strokeWidth="1" /></svg></SortIcon>
                </NameCell>
                <Clip $w={9} $pt={27}>юд</Clip>
                <Clip $pl={8}>Пос<br />сущ<br />пра</Clip>
                <HeadRow $active><HeadClip>Результат</HeadClip><HeadArrow width="9" height="10" viewBox="0 0 9 10"><path d="M4.500 0v9M1 5.500l3.500 3.500L8 5.500" fill="none" stroke="#1c1e21" strokeWidth="1.100" /></HeadArrow></HeadRow>
                <HeadCell>Охват</HeadCell>
                <HeadCell>Показы</HeadCell>
                <HeadCell>Цена за результат</HeadCell>
                <HeadCell>Оценка<br />качества<HeadSub>Диагностика ак...</HeadSub></HeadCell>
                <HeadCell>Оценка<br />коэффициента<br />вовлеченности<HeadSub>Диагностика ак...</HeadSub></HeadCell>
                <HeadCell>Оценка<br />коэффициента<br />конверсий<HeadSub>Диагностика ак...</HeadSub></HeadCell>
                <div />
              </Row>
              {rows.map((r, i) => (
                <Row key={r.n} $h={i === 5 ? 41 : 40} $b={i === 5 ? 3 : 1} $c={i === 5 ? '#dcdcdc' : undefined}>
                  <NameCell>
                    <CheckBox />
                    <TinyChevron as={Chevron} />
                    <Folder />
                    <CampName>{r.n}</CampName>
                    <Toggle $on={r.on} />
                  </NameCell>
                  <Dots>...</Dots>
                  <div />
                  <Cell>{r.r}<Sub>{r.rs}</Sub></Cell>
                  <Cell>{r.a}</Cell>
                  <Cell>{r.s}</Cell>
                  <Cell>{r.c}<Sub>{r.cs}</Sub></Cell>
                  <Cell><Dash>—</Dash></Cell>
                  <Cell><Dash>—</Dash></Cell>
                  <Cell><Dash>—</Dash></Cell>
                  <div />
                </Row>
              ))}
              <Row $h={53} $c="#efefef">
                <NameCell>
                  <TinyChevron as={SumChevron} />
                  <SumLabel>Результаты, число кампаний: 23
                    <svg width="10" height="10" viewBox="0 0 10 10"><circle cx="5" cy="5" r="5" fill="#444950" /><path d="M4.300 4.300h1.400V8H4.300zM4.300 2h1.400v1.400H4.300z" fill="#fff" /></svg>
                  </SumLabel>
                </NameCell>
                <SumDash>—</SumDash>
                <Cell $pt={5} $pr={30}><Dash $dark>—</Dash></Cell>
                <Cell $bold $pt={5}>76 831<Sub>Пользова...</Sub></Cell>
                <Cell $bold $pt={5}>301 294<Sub>Всего</Sub></Cell>
                <Cell $pt={5}><Dash $dark>—</Dash></Cell>
                <div /><div /><div /><div />
              </Row>
              <VScroll />
              <HScroll />
            </TableWrap>
          </Panel>
        </Content>
      </Body>

      <DockRow>
        <Dock>
          {dockIcons.map((d, i) => (
            <Slot key={i}>{d.el}{d.dot && <RunDot />}</Slot>
          ))}
          <DockSep />
          <Slot $w={37}><Ico><path d="M0 5c0-1 1-2 2-2h9l2 2h17c1 0 2 1 2 2v20c0 1-1 2-2 2H2c-1 0-2-1-2-2z" fill="#2a9ad6" /><circle cx="16" cy="18" r="6.500" fill="#1c7fb6" /><path d="M14.500 13.500h3v4.500h2.500L16 22.500 12 18h2.500z" fill="#2a9ad6" /></Ico></Slot>
          <Slot $w={37}><Ico><path d="M4 7h24l-2.500 23c-3 2-16 2-19 0z" fill="#6a6c70" /><ellipse cx="16" cy="6" rx="12" ry="4.500" fill="#b9bbbd" /><path d="M7 6l4-3 3 3 4-4 3 4 4-2" stroke="#eee" fill="none" /></Ico></Slot>
        </Dock>
      </DockRow>
    </Page>
  );
}
